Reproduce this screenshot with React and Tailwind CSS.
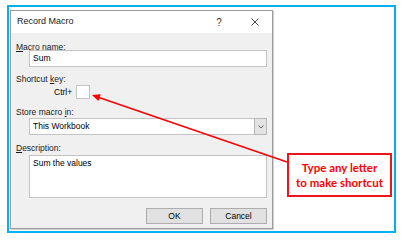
import React from "react";

const ui = { fontFamily: '"Liberation Sans", Arial, sans-serif' };

function Label({ children, className = "" }) {
  return (
    <div className={`h-[8px] text-[8.5px] leading-[10px] text-[#1a1a1a] whitespace-nowrap ${className}`}>
      {children}
    </div>
  );
}

export default function App() {
  return (
    <div className="relative w-[403px] h-[240px] bg-white pt-[5px] pl-[7px] overflow-hidden" style={ui}>
      <div className="flex w-[389px] h-[228px] border-2 border-[#00b0f0] pt-[3px] pl-[1px]">
        {/* dialog */}
        <div className="flex flex-col w-[263px] h-[219px] border border-[#9c9c9c] shadow-[1px_1px_0_#d0d0d0]">
          <div className="flex items-center h-[22px] bg-white pl-[6px] text-[9px] text-[#1a1a1a]">
            <span className="flex-1">Record Macro</span>
            <span className="w-[10px] text-center text-[10px] text-[#333]">?</span>
            <span className="ml-[27px] mr-[13px] flex items-center">
              <svg width="8" height="8" viewBox="0 0 8 8">
                <path d="M0.5 0.5 L7.5 7.5 M7.5 0.5 L0.5 7.5" stroke="#333" strokeWidth="0.9" />
              </svg>
            </span>
          </div>

          <div className="flex flex-col flex-1 bg-[#f0f0f0] pl-[5px] pr-[5px]">
            <Label className="mt-[9px]">
              <u>M</u>acro name:
            </Label>
            <div className="ml-[13px] w-[238px] h-[17px] flex items-center bg-white border border-[#c4c4c4] pl-[3px] text-[8.5px]">
              Sum
            </div>

            <Label className="mt-[7px]">
              Shortcut <u>k</u>ey:
            </Label>
            <div className="mt-[3px] ml-[38px] flex items-center h-[14px]">
              <span className="w-[22px] text-[8.5px] leading-[10px]">Ctrl+</span>
              <div className="w-[14px] h-[14px] bg-white border border-[#c4c4c4]" />
            </div>

            <Label className="mt-[8px]">
              Store macro <u>i</u>n:
            </Label>
            <div className="mt-[3px] ml-[13px] w-[238px] h-[17px] flex bg-white border border-[#c4c4c4] text-[8.5px]">
              <span className="flex-1 flex items-center pl-[3px]">This Workbook</span>
              <span className="w-[13px] flex items-center justify-center bg-[#e3e3e3] border border-[#b8b8b8] -my-px -mr-px">
                <svg width="6" height="4" viewBox="0 0 6 4">
                  <path d="M0.5 0.5 L3 3 L5.5 0.5" fill="none" stroke="#555" strokeWidth="0.9" />
                </svg>
              </span>
            </div>

            <Label className="mt-[8px]">
              <u>D</u>escription:
            </Label>
            <div className="mt-[4px] ml-[13px] w-[238px] h-[43px] bg-white border border-[#c4c4c4] pl-[3px] pt-[2px] text-[8.5px] leading-[10px]">
              Sum the values
            </div>

            <div className="mt-[10px] flex justify-end gap-[7px]">
              <div className="w-[57px] h-[16px] flex items-center justify-center bg-[#e1e1e1] border border-[#adadad] text-[8.5px]">
                OK
              </div>
              <div className="w-[57px] h-[16px] flex items-center justify-center bg-[#e1e1e1] border border-[#adadad] text-[8.5px]">
                Cancel
              </div>
            </div>
          </div>
        </div>

        {/* callout */}
        <div className="ml-[14px] mt-[143px]">
          <div
            className="w-[105px] h-[44px] border-2 border-[#f0141e] bg-white flex flex-col items-center justify-center text-[11.5px] leading-[15px] font-bold text-[#ff0000]"
            style={{ fontFamily: 'Lato, "Open Sans", sans-serif' }}
          >
            <span>Type any letter</span>
            <span>to make shortcut</span>
          </div>
        </div>
      </div>

      {/* arrow */}
      <svg className="absolute left-0 top-0 pointer-events-none" width="403" height="240" viewBox="0 0 403 240">
        <line x1="287" y1="162" x2="99" y2="97.5" stroke="#f00" strokeWidth="1.5" />
        <polygon points="92,95 98.4,101 100.7,94.3" fill="#f00" />
      </svg>
    </div>
  );
}
